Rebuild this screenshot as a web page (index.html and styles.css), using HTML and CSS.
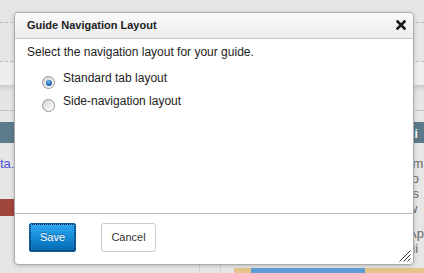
FILE: index.html
```html
<!DOCTYPE html>
<html>
<head>
<meta charset="utf-8">
<link rel="stylesheet" href="styles.css">
</head>
<body>
<div class="page">
  <div class="bar1"></div>
  <div class="bar2"></div>
  <div class="bar3"></div>
  <div class="bar4"></div>
  <div class="gap"></div>
  <div class="cols">
    <div class="col-left">
      <div class="col-head"></div>
      <p class="ltext"><a class="link">ta.</a></p>
      <div class="redbtn"></div>
    </div>
    <div class="col-mid">
      <div class="col-head"></div>
      <div class="tanbar"><span class="tan-a"></span><span class="tan-blue"></span><span class="tan-b"></span></div>
    </div>
    <div class="col-right">
      <div class="col-head"><span class="head-text">Li</span></div>
      <div class="rtext">
        <div>rm</div>
        <div>to</div>
        <div>rs</div>
        <div>w</div>
      </div>
      <div class="rtext second">
        <div>Ap</div>
        <div>ui</div>
      </div>
      <div class="tanbar"><span class="tan-b"></span></div>
    </div>
  </div>
</div>

<div class="dialog">
  <div class="dlg-title">
    <span class="dlg-title-text">Guide Navigation Layout</span>
    <svg class="close" width="10" height="10" viewBox="0 0 10 10"><path d="M1.5 1.5 L8.5 8.5 M8.5 1.5 L1.5 8.5" stroke="#1a1a1a" stroke-width="2.6" stroke-linecap="square"/></svg>
  </div>
  <div class="dlg-body">
    <p class="intro">Select the navigation layout for your guide.</p>
    <div class="options">
      <label class="opt"><span class="radio checked"></span><span>Standard tab layout</span></label>
      <label class="opt"><span class="radio"></span><span>Side-navigation layout</span></label>
    </div>
  </div>
  <div class="dlg-foot">
    <button class="btn btn-save">Save</button>
    <button class="btn btn-cancel">Cancel</button>
  </div>
  <svg class="grip" width="12" height="12" viewBox="0 0 12 12"><path d="M0.5 11.5 L11.5 0.5 M4.5 11.5 L11.5 4.5 M8.5 11.5 L11.5 8.5" stroke="#333" stroke-width="1"/></svg>
</div>
</body>
</html>
```

FILE: styles.css
```css
html, body {
  margin: 0;
  padding: 0;
}
body {
  width: 424px;
  height: 273px;
  overflow: hidden;
  background: #e6e6e6;
  font-family: "Liberation Sans", Arial, sans-serif;
  position: relative;
}
.page {
  width: 424px;
}
.bar1 {
  height: 22px;
  border-bottom: 1px dashed #bdbdbd;
}
.bar2 {
  height: 38px;
  border-bottom: 1px dashed #bdbdbd;
}
.bar3 {
  height: 23px;
  background: #eeeeee;
}
.bar4 {
  height: 25px;
  background: linear-gradient(#cbcbcb, #e3e3e3 6px, #e6e6e6);
  border-bottom: 1px dashed #bdbdbd;
}
.gap {
  height: 11px;
}
.cols {
  display: flex;
  height: 156px;
}
.col-left {
  width: 203px;
  border-right: 1px solid #cfcfcf;
}
.col-mid {
  width: 179px;
  margin-left: 20px;
  border-left: 1px solid #cfcfcf;
  display: flex;
  flex-direction: column;
}
.col-right {
  flex: 1;
  display: flex;
  flex-direction: column;
}
.col-head {
  height: 21px;
  background: #5b7a8a;
  color: #fff;
  font-weight: bold;
  font-size: 12px;
  box-sizing: border-box;
  padding: 3px 0 0 10px;
  line-height: 18px;
  white-space: nowrap;
}
.ltext {
  margin: 13px 0 0;
  font-size: 13px;
  line-height: 15px;
}
.link {
  color: #4d55d6;
}
.redbtn {
  margin-top: 28px;
  height: 17px;
  width: 120px;
  background: #a1463a;
}
.rtext {
  margin-top: 13px;
  padding-left: 11px;
  font-size: 13px;
  line-height: 15px;
  color: #6a6a6a;
  white-space: nowrap;
}
.rtext.second {
  margin-top: 10px;
}
.tanbar {
  margin-top: auto;
  height: 10px;
  display: flex;
}
.col-mid .tanbar {
  margin-left: 13px;
}
.tan-a {
  width: 17px;
  background: #e5c58d;
}
.tan-blue {
  width: 114px;
  background: #5d9ed8;
}
.tan-b {
  flex: 1;
  background: #e5c58d;
}

/* dialog */
.dialog {
  position: absolute;
  left: 14px;
  top: 12px;
  width: 400px;
  height: 253px;
  box-sizing: border-box;
  border: 1px solid #ababab;
  border-radius: 4px;
  background: #fff;
  box-shadow: 0 1px 4px rgba(0, 0, 0, 0.18);
  display: flex;
  flex-direction: column;
  overflow: hidden;
}
.dlg-title {
  height: 25px;
  border-bottom: 1px solid #c9c9c9;
  background: linear-gradient(#fafafa, #ececec);
  display: flex;
  align-items: center;
  justify-content: space-between;
  padding: 0 7px 0 12px;
  border-radius: 3px 3px 0 0;
}
.dlg-title-text {
  font-size: 11px;
  font-weight: bold;
  color: #222;
  line-height: 25px;
}
.close {
  margin-bottom: 2px;
}
.dlg-body {
  height: 175px;
  box-sizing: border-box;
  padding: 6px 12px 0;
  border-bottom: 1px solid #b9b9b9;
  font-size: 12px;
  color: #222;
}
.intro {
  margin: 0;
  line-height: 15px;
}
.options {
  margin-top: 7px;
  padding-left: 15px;
}
.opt {
  display: flex;
  align-items: center;
  height: 23px;
  line-height: 23px;
}
.radio {
  width: 13px;
  height: 13px;
  box-sizing: border-box;
  border-radius: 50%;
  border: 1px solid #939393;
  background: linear-gradient(135deg, #d2d2d2, #f4f4f4 70%, #fdfdfd);
  margin: 8px 8px 0 0;
  display: flex;
  align-items: center;
  justify-content: center;
}
.radio.checked::after {
  content: "";
  width: 6px;
  height: 6px;
  border-radius: 50%;
  background: radial-gradient(circle at 45% 35%, #7cc0f0 0, #2a74c0 45%, #123f78 100%);
}
.dlg-foot {
  flex: 1;
  display: flex;
  align-items: flex-start;
  padding: 9px 0 0 14px;
  gap: 25px;
}
.btn {
  height: 29px;
  box-sizing: border-box;
  font-family: "Liberation Sans", Arial, sans-serif;
  font-size: 11px;
  line-height: 27px;
  padding: 0;
  margin: 0;
}
.btn-save {
  width: 47px;
  color: #fff;
  border: 1px solid #0b5d9e;
  border-radius: 2px;
  background: linear-gradient(#2fa7ee, #148bd8 50%, #0567b0);
  outline: 1px dotted #0d2540;
  outline-offset: -2px;
  text-shadow: 0 -1px 0 rgba(0, 0, 0, 0.3);
}
.btn-cancel {
  width: 55px;
  color: #333;
  border: 1px solid #cacaca;
  border-radius: 3px;
  background: #fff;
}
.grip {
  position: absolute;
  right: 2px;
  bottom: 2px;
}
```
